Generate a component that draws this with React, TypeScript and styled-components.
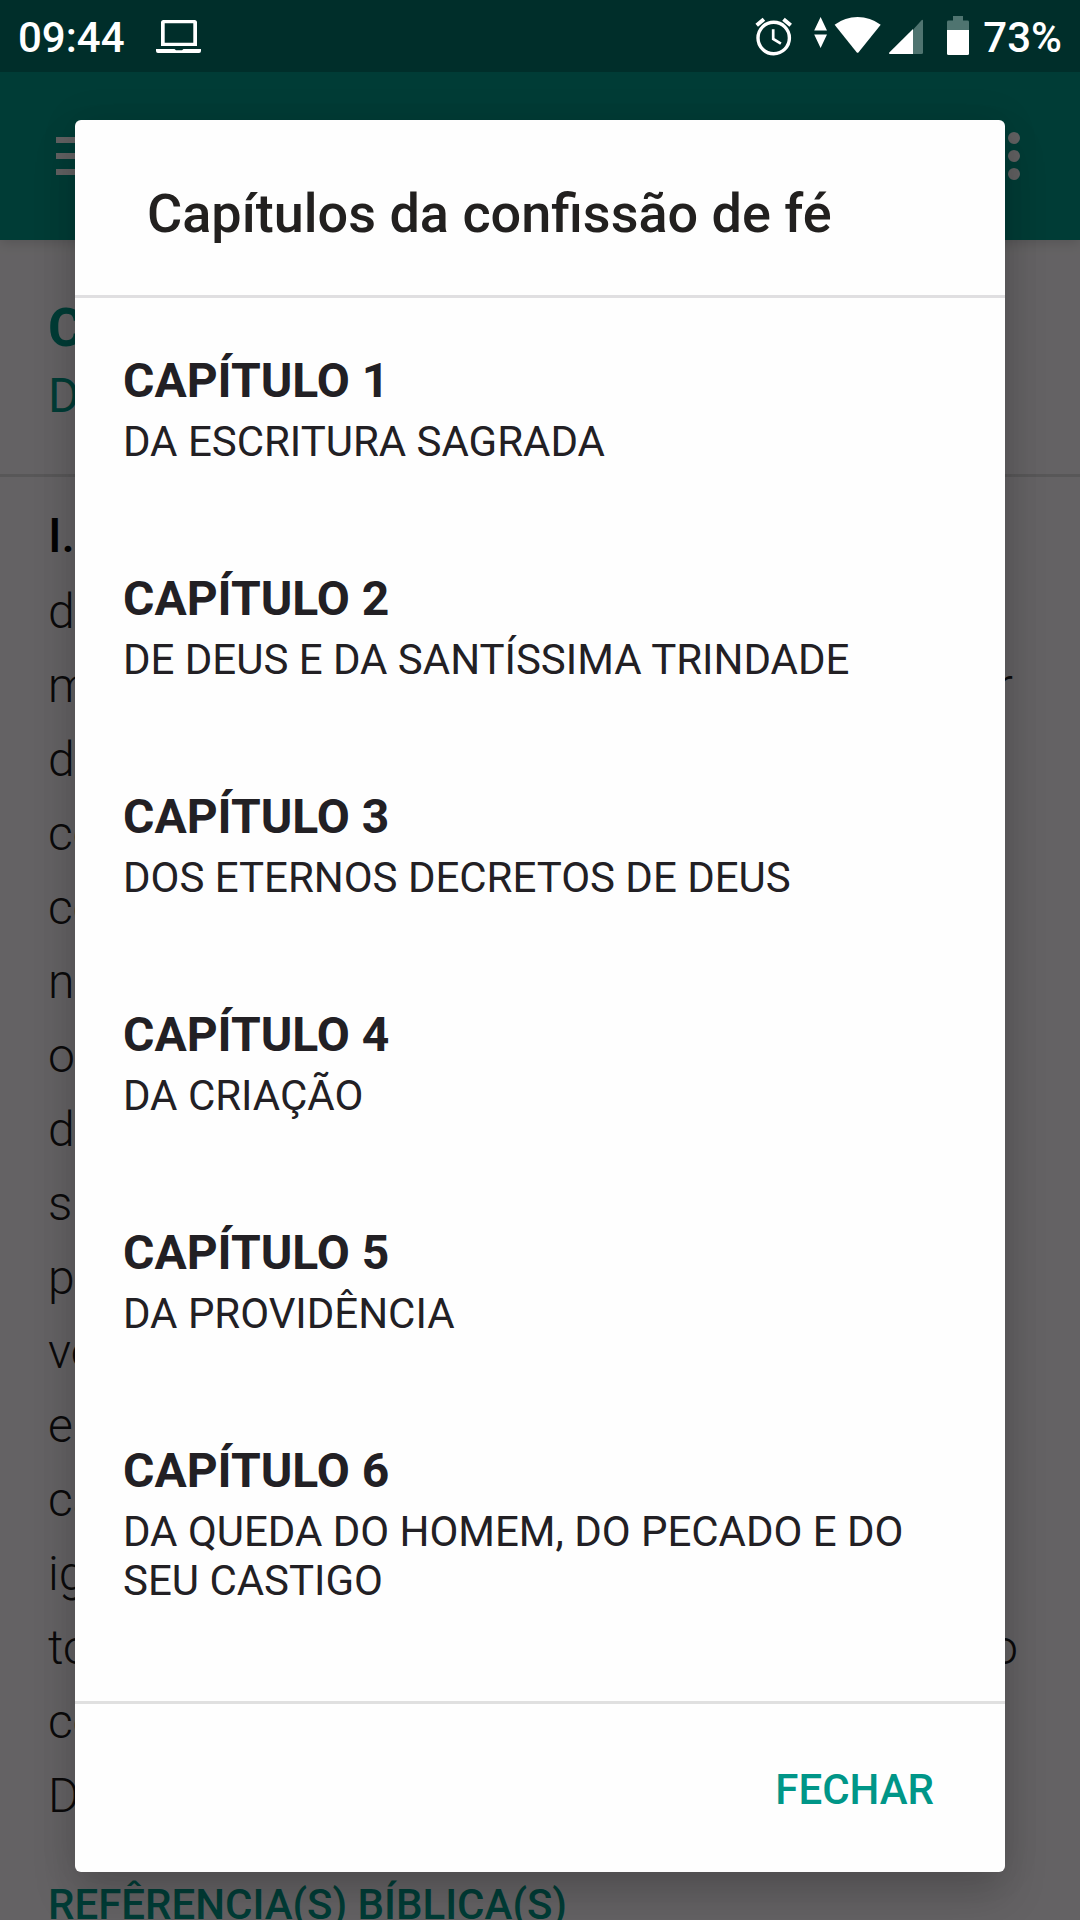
import React from "react";
import styled, { createGlobalStyle } from "styled-components";

const GlobalStyle = createGlobalStyle`
  html, body { margin: 0; padding: 0; background: #646464; }
  *, *::before, *::after { box-sizing: border-box; }
  body { overflow: hidden; }
`;

const Screen = styled.div`
  position: relative;
  width: 1080px;
  height: 1920px;
  overflow: hidden;
  display: flex;
  flex-direction: column;
  background: #faf6f9;
  color: #212121;
  font-family: Roboto, "Noto Sans", sans-serif;
`;

const StatusBar = styled.header`
  position: relative;
  z-index: 3;
  flex: none;
  height: 72px;
  display: flex;
  justify-content: space-between;
  padding: 0 18px 0 18px;
  background: #002e2a;
  color: #fff;
`;

const StatusGroup = styled.div`
  display: flex;
  align-items: flex-start;
`;

const StatusText = styled.span`
  font-size: 42px;
  line-height: 49px;
  font-weight: 500;
  padding-top: 13px;
`;

const StatusIcon = styled.svg<{ $gap: number }>`
  flex: none;
  display: block;
  height: 72px;
  margin-left: ${(p) => p.$gap}px;
`;

const AppBar = styled.div`
  position: relative;
  z-index: 1;
  flex: none;
  height: 168px;
  display: flex;
  justify-content: space-between;
  align-items: center;
  padding: 0 60px 0 56px;
  background: #009688;
  box-shadow: 0 3px 12px rgba(0, 0, 0, 0.15);
`;

const MenuIcon = styled.div`
  display: flex;
  flex-direction: column;
  gap: 10px;
`;

const MenuBar = styled.span`
  width: 54px;
  height: 6px;
  background: #f4f2f4;
`;

const MoreIcon = styled.div`
  display: flex;
  flex-direction: column;
  gap: 6px;
`;

const Dot = styled.span`
  width: 12px;
  height: 12px;
  border-radius: 50%;
  background: #f4f2f4;
`;

const ChapterHead = styled.div`
  flex: none;
  height: 237px;
  padding: 56px 48px 0;
  border-bottom: 3px solid #dcdadc;
  color: #009688;
`;

const ChapterNumber = styled.div`
  font-size: 54px;
  line-height: 63px;
  font-weight: 700;
`;

const ChapterName = styled.div`
  margin-top: 9px;
  font-size: 48px;
  line-height: 56px;
`;

const Body = styled.div`
  padding: 22px 48px 0;
  font-size: 48px;
  line-height: 74px;
  font-weight: 300;
  color: #1c1a1c;
`;

const BodyLine = styled.div<{ $width?: number }>`
  white-space: ${(p) => (p.$width ? "normal" : "nowrap")};
  width: ${(p) => (p.$width ? `${p.$width}px` : "auto")};
  text-align-last: ${(p) => (p.$width ? "justify" : "auto")};
`;

const LeadLine = styled(BodyLine)`
  margin-bottom: 2px;
  b { font-weight: 500; color: #0c0a0c; }
`;

const References = styled.div`
  margin-top: 47px;
  padding: 0 48px;
  font-size: 42px;
  line-height: 49px;
  font-weight: 500;
  color: #009688;
`;

const Scrim = styled.div`
  position: absolute;
  inset: 0;
  z-index: 2;
  display: flex;
  justify-content: center;
  padding: 120px 75px 48px;
  background: rgba(0, 0, 0, 0.6);
`;

const Dialog = styled.section`
  flex: 1;
  display: flex;
  flex-direction: column;
  border-radius: 6px;
  background: #fefefe;
  box-shadow: 0 24px 44px rgba(0, 0, 0, 0.16), 0 0 36px rgba(0, 0, 0, 0.1);
`;

const DialogTitle = styled.h1`
  flex: none;
  margin: 0;
  height: 178px;
  padding: 62px 72px 0;
  border-bottom: 3px solid #e0dfe1;
  font-size: 54px;
  line-height: 63px;
  font-weight: 500;
  color: #22201f;
`;

const ChapterList = styled.div`
  flex: 1;
  min-height: 0;
  display: flex;
  flex-direction: column;
  gap: 105px;
  padding: 55px 48px 0;
`;

const Chapter = styled.article`
  display: flex;
  flex-direction: column;
  gap: 8px;
  color: #222024;
`;

const ChapterTitle = styled.h2`
  margin: 0;
  font-size: 48px;
  line-height: 56px;
  font-weight: 700;
`;

const ChapterText = styled.p`
  margin: 0;
  font-size: 42px;
  line-height: 49px;
  letter-spacing: -0.02px;
`;

const Actions = styled.footer`
  flex: none;
  height: 171px;
  display: flex;
  justify-content: flex-end;
  align-items: flex-start;
  padding: 61px 71px 0 0;
  border-top: 3px solid #e0e0e0;
`;

const CloseButton = styled.button`
  padding: 0;
  border: 0;
  background: none;
  font: 500 42px/49px Roboto, "Noto Sans", sans-serif;
  color: #009688;
`;

const lines: { text: string; width?: number }[] = [
  { text: "da criação e da providência de tal modo" },
  { text: "manifestem a bondade, a sabedoria e o poder", width: 965 },
  { text: "de Deus, que os homens ficam" },
  { text: "contudo não são suficientes para dar" },
  { text: "conhecimento de Deus e da sua vontade" },
  { text: "necessário para a salvação; por isso foi" },
  { text: "o Senhor servido, em diversos tempos e" },
  { text: "diferentes modos, revelar-se e declarar à" },
  { text: "sua Igreja aquela sua vontade; e depois," },
  { text: "para melhor preservação e propagação da" },
  { text: "verdade, para o mais seguro" },
  { text: "e conforto da Igreja contra a corrupção da" },
  { text: "carne e malícia de Satanás, foi" },
  { text: "igualmente servido fazê-la escrever" },
  { text: "toda. Isto torna a Escritura Sagrada, tendo", width: 970 },
  { text: "cessado aqueles antigos modos de revelar" },
  { text: "Deus a sua vontade ao seu povo." },
];

const chapters = [
  "DA ESCRITURA SAGRADA",
  "DE DEUS E DA SANTÍSSIMA TRINDADE",
  "DOS ETERNOS DECRETOS DE DEUS",
  "DA CRIAÇÃO",
  "DA PROVIDÊNCIA",
  "DA QUEDA DO HOMEM, DO PECADO E DO SEU CASTIGO",
];

const Laptop = () => (
  <StatusIcon $gap={31} width="45" viewBox="156 0 45 72">
    <path
      fill="#fff"
      fillRule="evenodd"
      d="M163.500 20H194.500Q197 20 197 22.500V46H161V22.500Q161 20 163.500 20ZM164.700 23.300V42.800H193.300V23.300Z"
    />
    <path fill="#fff" d="M156 49H174.500L176 50.300H182L183.500 49H201V51Q201 53 199 53H158Q156 53 156 51Z" />
  </StatusIcon>
);

const Alarm = () => (
  <StatusIcon $gap={0} width="38" viewBox="755 0 38 72" fill="none" stroke="#fff">
    <circle cx="773.700" cy="38" r="15.700" strokeWidth="3.400" />
    <path strokeWidth="4" d="M756.700 25.200L763.900 19.200M783.500 19.200L790.700 25.200" />
    <path strokeWidth="2.700" d="M773.200 29.300V39L780.900 43.700" />
  </StatusIcon>
);

const Wifi = () => (
  <StatusIcon $gap={21} width="67" viewBox="814 0 67 72" fill="#fff">
    <path d="M820.600 17L827 30.400H814.200ZM814.200 34.600H827L820.600 48Z" />
    <path d="M834.600 24.700Q845 17 857.600 17T880.700 24.700L858.600 52.300Q857.600 53.300 856.600 52.300Z" />
  </StatusIcon>
);

const Signal = () => (
  <StatusIcon $gap={8} width="34" viewBox="889 0 34 72">
    <path fill="#4f7470" d="M913 29.700L921.300 20.500Q923 19 923 21V52.500Q923 54 921.500 54H913Z" />
    <path fill="#fff" d="M913 29V54H890Q888.300 53.800 889.300 52.400Z" />
  </StatusIcon>
);

const Battery = () => (
  <StatusIcon $gap={24} width="22" viewBox="947 0 22 72">
    <path fill="#4f7470" d="M953 16H963V20.600H967.500Q969 20.600 969 22V30H947V22Q947 20.600 948.500 20.600H953Z" />
    <path fill="#fff" d="M947 30H969V53.500Q969 55 967.500 55H948.500Q947 55 947 53.500Z" />
  </StatusIcon>
);

const BatteryLevel = styled(StatusText)`
  margin-left: 14px;
`;

export default function App() {
  return (
    <Screen>
      <GlobalStyle />
      <StatusBar>
        <StatusGroup>
          <StatusText>09:44</StatusText>
          <Laptop />
        </StatusGroup>
        <StatusGroup>
          <Alarm />
          <Wifi />
          <Signal />
          <Battery />
          <BatteryLevel>73%</BatteryLevel>
        </StatusGroup>
      </StatusBar>

      <AppBar>
        <MenuIcon>
          <MenuBar />
          <MenuBar />
          <MenuBar />
        </MenuIcon>
        <MoreIcon>
          <Dot />
          <Dot />
          <Dot />
        </MoreIcon>
      </AppBar>

      <ChapterHead>
        <ChapterNumber>CAPÍTULO 1</ChapterNumber>
        <ChapterName>DA ESCRITURA SAGRADA</ChapterName>
      </ChapterHead>
      <Body>
        <LeadLine>
          <b>I.</b> Ainda que a luz da natureza e as obras
        </LeadLine>
        {lines.map((line) => (
          <BodyLine key={line.text} $width={line.width}>
            {line.text}
          </BodyLine>
        ))}
      </Body>
      <References>REFÊRENCIA(S) BÍBLICA(S)</References>

      <Scrim>
        <Dialog role="dialog">
          <DialogTitle>Capítulos da confissão de fé</DialogTitle>
          <ChapterList>
            {chapters.map((name, i) => (
              <Chapter key={name}>
                <ChapterTitle>CAPÍTULO {i + 1}</ChapterTitle>
                <ChapterText>{name}</ChapterText>
              </Chapter>
            ))}
          </ChapterList>
          <Actions>
            <CloseButton>FECHAR</CloseButton>
          </Actions>
        </Dialog>
      </Scrim>
    </Screen>
  );
}
